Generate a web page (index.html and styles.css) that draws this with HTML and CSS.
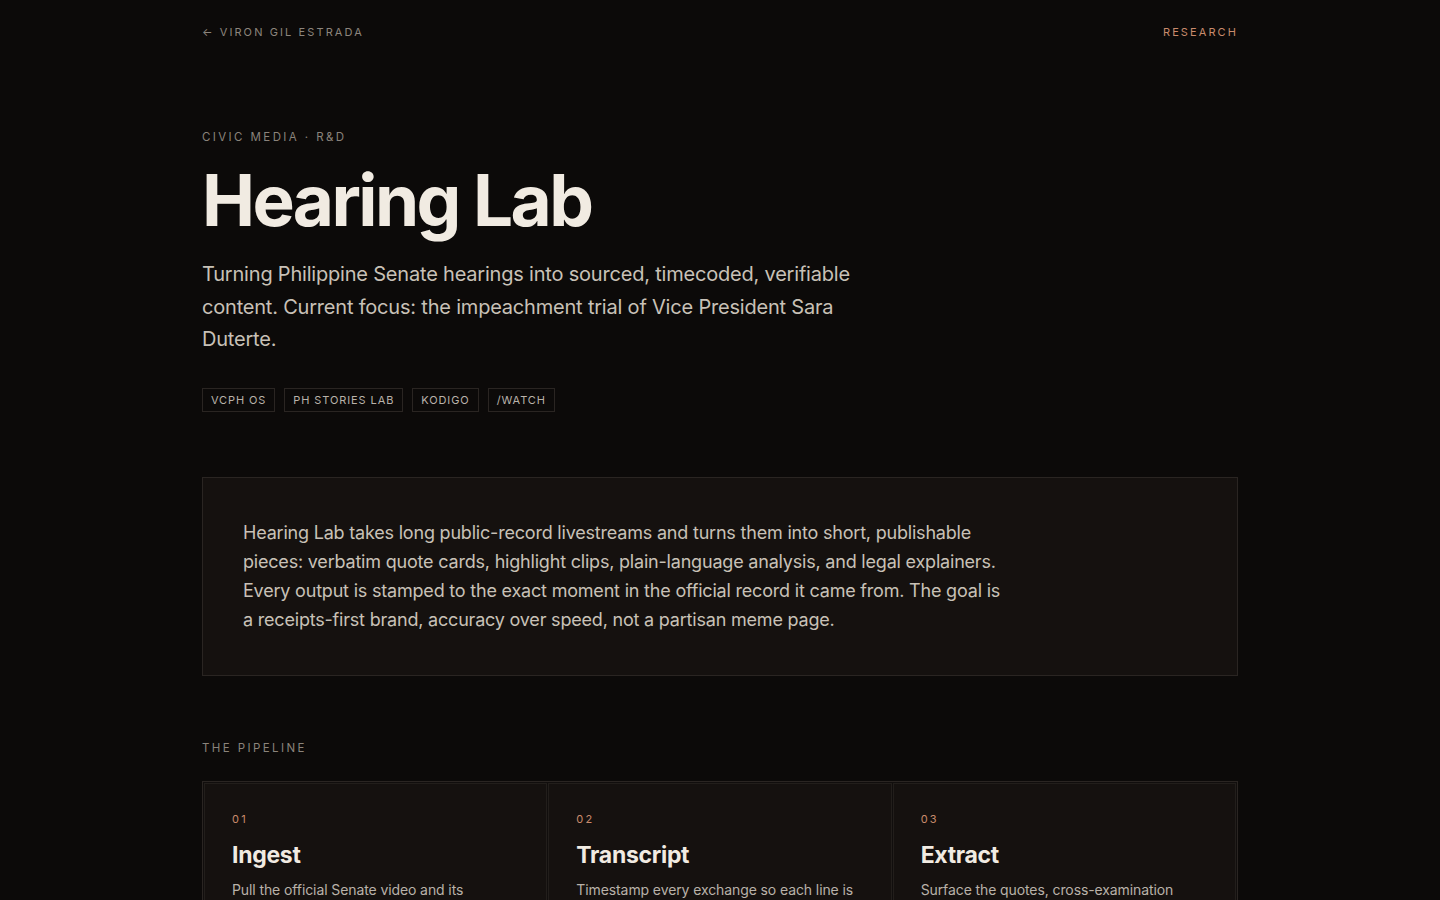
FILE: index.html
```html
<!DOCTYPE html>
<html lang="en">
<head>
<meta charset="utf-8">
<title>Hearing Lab</title>
<link rel="stylesheet" href="styles.css">
</head>
<body>
<div class="page">
  <header class="nav">
    <a class="nav-back" href="#"><span class="arrow">←</span> VIRON GIL ESTRADA</a>
    <a class="nav-section" href="#">RESEARCH</a>
  </header>

  <section class="hero">
    <div class="eyebrow">CIVIC MEDIA · R&amp;D</div>
    <h1 class="title">Hearing Lab</h1>
    <p class="lede">Turning Philippine Senate hearings into sourced, timecoded, verifiable content. Current focus: the impeachment trial of Vice President Sara Duterte.</p>
    <ul class="tags">
      <li class="tag">VCPH OS</li>
      <li class="tag">PH STORIES LAB</li>
      <li class="tag">KODIGO</li>
      <li class="tag">/WATCH</li>
    </ul>
  </section>

  <section class="summary">
    <p>Hearing Lab takes long public-record livestreams and turns them into short, publishable pieces: verbatim quote cards, highlight clips, plain-language analysis, and legal explainers. Every output is stamped to the exact moment in the official record it came from. The goal is a receipts-first brand, accuracy over speed, not a partisan meme page.</p>
  </section>

  <section class="pipeline">
    <div class="section-label">THE PIPELINE</div>
    <div class="steps">
      <div class="step">
        <div class="step-num">01</div>
        <h3 class="step-title">Ingest</h3>
        <p class="step-text">Pull the official Senate video and its transcript, then archive the source file.</p>
      </div>
      <div class="step">
        <div class="step-num">02</div>
        <h3 class="step-title">Transcript</h3>
        <p class="step-text">Timestamp every exchange so each line is traceable back to the record.</p>
      </div>
      <div class="step">
        <div class="step-num">03</div>
        <h3 class="step-title">Extract</h3>
        <p class="step-text">Surface the quotes, cross-examination moments and rulings worth publishing.</p>
      </div>
    </div>
  </section>
</div>
</body>
</html>
```

FILE: styles.css
```css
* { box-sizing: border-box; }
html, body {
  margin: 0;
  padding: 0;
  background: #0c0a09;
}
body {
  font-family: Inter, "Noto Sans", sans-serif;
  color: #d6cfc6;
}
a { text-decoration: none; }

.page {
  width: 1036px;
  margin: 0 auto;
}

.nav {
  display: flex;
  justify-content: space-between;
  align-items: center;
  height: 64px;
  font-size: 11px;
  letter-spacing: 2.1px;
  font-weight: 400;
}
.nav-back { color: #8c857d; }
.arrow { letter-spacing: 0; margin-right: 2px; }
.nav-section { color: #c98b6c; }

.hero {
  padding-top: 65px;
}
.eyebrow {
  font-size: 11.5px;
  letter-spacing: 2.4px;
  color: #8a837b;
  line-height: 16px;
}
.title {
  margin: 15px 0 0;
  font-size: 71px;
  line-height: 80px;
  font-weight: 700;
  letter-spacing: -2.6px;
  color: #f1ebe2;
}
.lede {
  margin: 18px 0 0;
  max-width: 680px;
  font-size: 20px;
  line-height: 32.5px;
  letter-spacing: -0.2px;
  color: #c8c1b7;
}
.tags {
  display: flex;
  gap: 9px;
  list-style: none;
  padding: 0;
  margin: 32px 0 0;
}
.tag {
  height: 24px;
  padding: 0 8px;
  display: flex;
  align-items: center;
  border: 1px solid #2a2522;
  font-size: 11px;
  letter-spacing: 0.9px;
  color: #b9b2a9;
  font-weight: 400;
}

.summary {
  margin-top: 65px;
  background: #15110f;
  border: 1px solid #2a2522;
  padding: 40px 40px 40px;
}
.summary p {
  margin: 0;
  max-width: 770px;
  font-size: 18px;
  line-height: 29.3px;
  letter-spacing: -0.2px;
  color: #c8c1b7;
}

.pipeline {
  margin-top: 64px;
}
.section-label {
  font-size: 11.5px;
  letter-spacing: 2.4px;
  color: #8a837b;
  line-height: 16px;
}
.steps {
  margin-top: 25px;
  display: grid;
  grid-template-columns: repeat(3, 1fr);
  gap: 1px;
  padding: 1px;
  border: 1px solid #2a2522;
  background: #110e0d;
}
.step {
  padding: 28px 27px 30px;
  border: 1px solid #221e1b;
  background: #15110f;
}
.step-num {
  font-size: 11px;
  letter-spacing: 2.2px;
  color: #c98b6c;
  line-height: 14px;
}
.step-title {
  margin: 14px 0 0;
  font-size: 23px;
  line-height: 30px;
  font-weight: 700;
  letter-spacing: -0.3px;
  color: #f1ebe2;
}
.step-text {
  margin: 9px 0 0;
  max-width: 285px;
  font-size: 14px;
  line-height: 22px;
  letter-spacing: -0.1px;
  color: #b9b2a9;
}
```
